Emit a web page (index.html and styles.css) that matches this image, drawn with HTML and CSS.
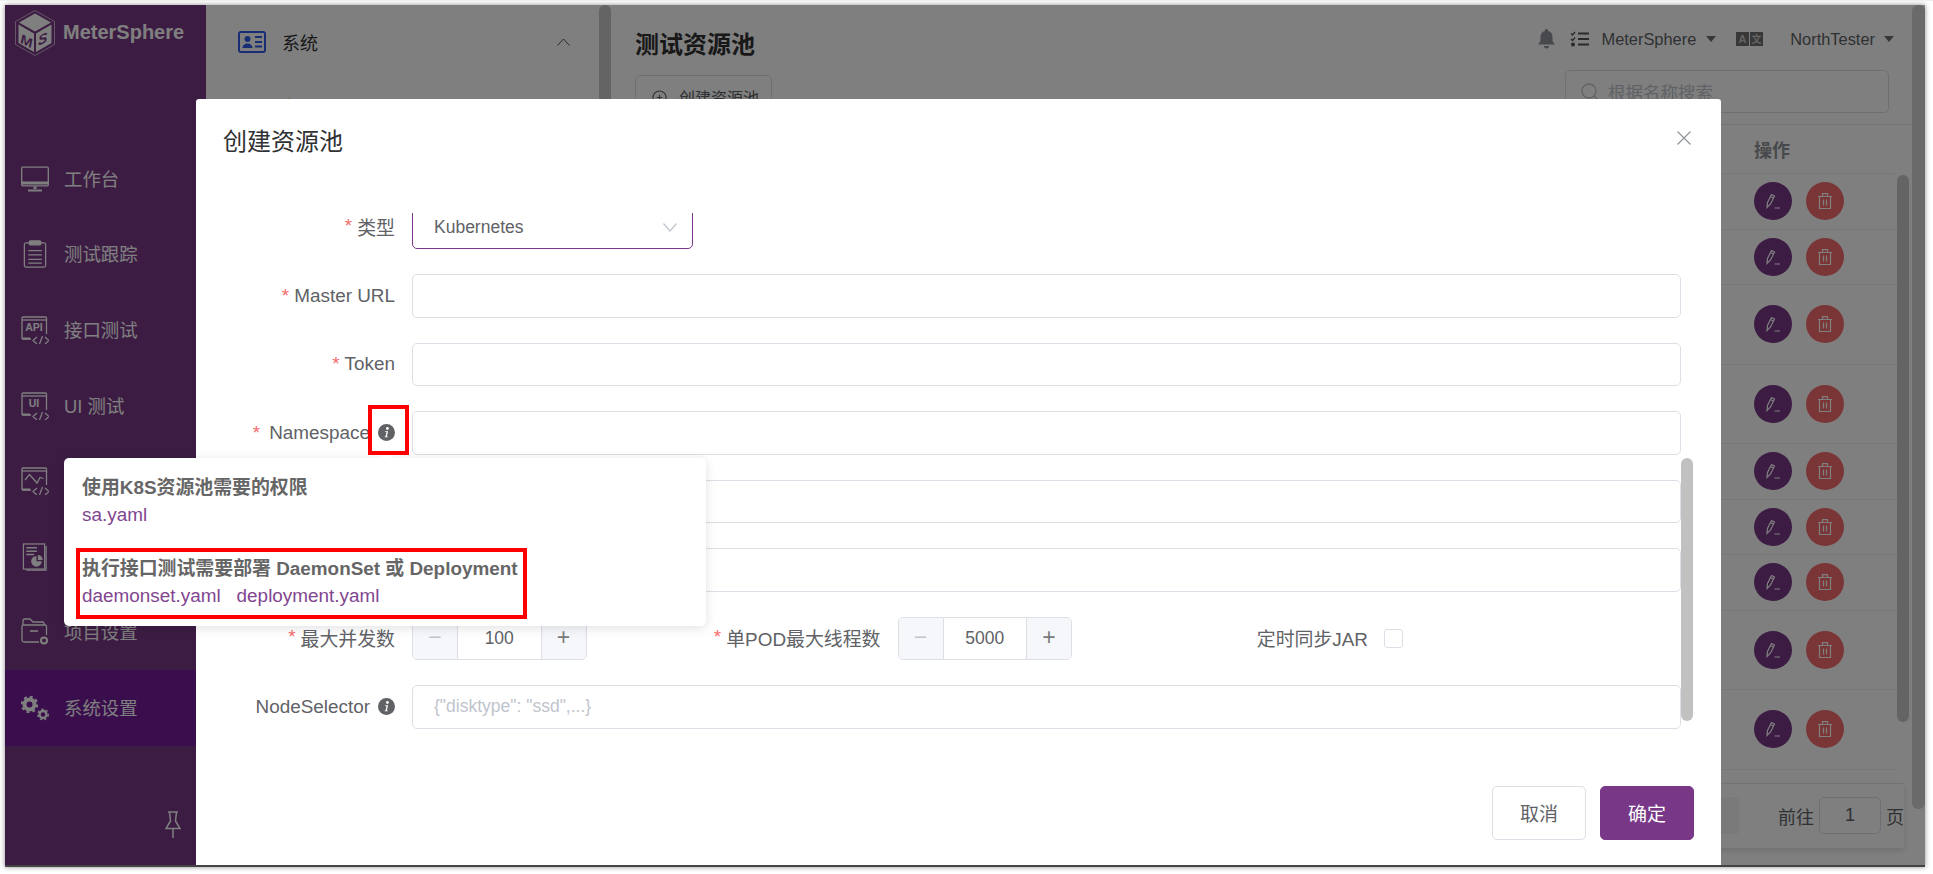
FILE: index.html
```html
<!DOCTYPE html>
<html lang="zh">
<head>
<meta charset="utf-8">
<title>创建资源池</title>
<link rel="stylesheet" href="styles.css">
</head>
<body>
<div class="app">
  <aside class="side">
    <div class="logo">
      <svg class="logo-mark" viewBox="0 0 40 46">
        <polygon points="20,.5 39.5,11.5 39.5,34.5 20,45.5 .5,34.5 .5,11.5" fill="none" stroke="#fff" stroke-width=".6"/>
        <polygon points="20,3.5 36,12.5 20,21.5 4,12.5" fill="#fff"/>
        <polygon points="3.5,14.5 19,23.5 19,42 3.5,33" fill="#fff"/>
        <polygon points="36.5,14.5 21,23.5 21,42 36.5,33" fill="#fff"/>
        <text class="logo-m" transform="translate(5.5 33) skewY(26)">M</text>
        <text class="logo-s" transform="translate(23 36) skewY(-26)">S</text>
      </svg>
      <span class="logo-text">MeterSphere</span>
    </div>
    <nav class="nav">
      <a class="nav-item">
        <svg class="nav-ico" viewBox="0 0 28 25" fill="none" stroke="#fff"><rect x=".7" y=".7" width="26.6" height="18.6" rx="1" stroke-width="1.3"/><path d="M1 16.5h26" stroke-width="3"/><path d="M14 20v2.5" stroke-width="3"/><path d="M7 24h14" stroke-width="2"/></svg>
        <span class="nav-text">工作台</span>
      </a>
      <a class="nav-item">
        <svg class="nav-ico" viewBox="0 0 28 29" fill="none" stroke="#fff" stroke-width="1.3"><path d="M8 3H4.500A1.500 1.500 0 0 0 3 4.500v22A1.500 1.500 0 0 0 4.500 28h19a1.500 1.500 0 0 0 1.500-1.500v-22A1.500 1.500 0 0 0 23.500 3H20"/><rect x="8" y="1" width="12" height="4" rx="1" fill="#fff"/><path d="M7 11h14M7 15.500h14M7 20h14M7 24h14"/></svg>
        <span class="nav-text">测试跟踪</span>
      </a>
      <a class="nav-item">
        <svg class="nav-ico" viewBox="0 0 28 28" fill="none" stroke="#fff" stroke-width="1.3"><path d="M25.500 18V2a1 1 0 0 0-1-1H2a1 1 0 0 0-1 1v20a1 1 0 0 0 1 1h8"/><path d="M1 4h24.500"/><path d="M1 22.500h8" stroke-width="2"/><path d="M16 21l-4 3.500 4 3.500M24 21l4 3.500-4 3.500M21.500 20l-3 8"/><text class="ico-text" x="13" y="15" text-anchor="middle">API</text></svg>
        <span class="nav-text">接口测试</span>
      </a>
      <a class="nav-item">
        <svg class="nav-ico" viewBox="0 0 28 28" fill="none" stroke="#fff" stroke-width="1.3"><path d="M25.500 18V2a1 1 0 0 0-1-1H2a1 1 0 0 0-1 1v20a1 1 0 0 0 1 1h8"/><path d="M1 4h24.500"/><path d="M1 22.500h8" stroke-width="2"/><path d="M16 21l-4 3.500 4 3.500M24 21l4 3.500-4 3.500M21.500 20l-3 8"/><text class="ico-text" x="13" y="15" text-anchor="middle">UI</text></svg>
        <span class="nav-text">UI 测试</span>
      </a>
      <a class="nav-item">
        <svg class="nav-ico" viewBox="0 0 28 28" fill="none" stroke="#fff" stroke-width="1.3"><path d="M25.500 18V2a1 1 0 0 0-1-1H2a1 1 0 0 0-1 1v20a1 1 0 0 0 1 1h8"/><path d="M1 4h24.500"/><path d="M1 22.500h8" stroke-width="2"/><path d="M16 21l-4 3.500 4 3.500M24 21l4 3.500-4 3.500M21.500 20l-3 8"/><path d="M4 13l4.500-5.500 4 4.500 3.500 4 3-5.500 3.500 1"/></svg>
      </a>
      <a class="nav-item">
        <svg class="nav-ico" viewBox="0 0 28 29" fill="none" stroke="#fff" stroke-width="1.3"><rect x="2" y="1" width="22" height="26"/><path d="M25.500 3v25H5"/><path d="M5 5h11M5 8.500h11M5 12h8" stroke-width="1.600"/><path d="M15.500 13.500a5.500 5.500 0 1 0 5.500 5.500h-5.500z" fill="#fff" stroke="none"/><path d="M17 12.500a5 5 0 0 1 5 5h-5z" fill="#fff" stroke="none"/></svg>
      </a>
      <a class="nav-item">
        <svg class="nav-ico" viewBox="0 0 28 28" fill="none" stroke="#fff" stroke-width="1.3"><path d="M18 24H3a2 2 0 0 1-2-2V8.500a1.500 1.500 0 0 1 1.500-1.500H24a1.500 1.500 0 0 1 1.500 1.500V17"/><path d="M2 7V2.500A1.500 1.500 0 0 1 3.500 1H9l3 3h9.500A1.500 1.500 0 0 1 23 5.500V7"/><path d="M9 13h8" stroke-width="1.600"/><circle cx="23" cy="22.500" r="3" stroke-width="2"/></svg>
        <span class="nav-text">项目设置</span>
      </a>
      <a class="nav-item is-active">
        <svg class="nav-ico" viewBox="0 0 28 25" fill="none" stroke="#fff"><circle cx="8.500" cy="9" r="5" stroke-width="4"/><circle cx="8.500" cy="9" r="7.700" stroke-width="2" stroke-dasharray="3 3.050"/><circle cx="22" cy="19" r="3.500" stroke-width="2.400"/><circle cx="22" cy="19" r="5.200" stroke-width="1.500" stroke-dasharray="2.200 2.250"/></svg>
        <span class="nav-text">系统设置</span>
      </a>
    </nav>
    <svg class="pin" viewBox="0 0 16 27" fill="none" stroke="#fff" stroke-width="1.500"><path d="M3 1h10M4.500 1l1 9L1 17.500h14L10.500 10l1-9M8 17.500V27"/></svg>
  </aside>

  <section class="sub">
    <div class="sub-list">
      <div class="sub-head">
        <svg class="sub-ico" viewBox="0 0 28 22"><rect x="1" y="1" width="26" height="20" rx="2" fill="none" stroke="#2f5bea" stroke-width="2"/><circle cx="9.500" cy="8" r="3" fill="#2f5bea"/><path d="M4.500 17c0-6 10-6 10 0z" fill="#2f5bea"/><path d="M17 6h7M17 11h7M17 15.500h7" stroke="#2f5bea" stroke-width="2"/></svg>
        <span class="sub-title">系统</span>
        <svg class="chev-up" viewBox="0 0 13 8" fill="none" stroke="#555" stroke-width="1"><path d="M.5 7.500l6-6.500 6 6.500"/></svg>
      </div>
      <div class="sub-child">用户</div>
    </div>
    <div class="sub-scroll"></div>
  </section>

  <main class="main">
    <div class="content">
      <header class="head">
        <div class="head-left">
          <h1 class="page-title">测试资源池</h1>
          <button class="create-btn">
            <svg class="plus-ico" viewBox="0 0 16 16" fill="none" stroke="#606266" stroke-width="1.200"><circle cx="8" cy="8" r="7"/><path d="M8 5v6M5 8h6"/></svg>
            创建资源池
          </button>
        </div>
        <div class="head-right">
          <div class="topnav">
            <svg class="bell" viewBox="0 0 17 20" fill="#909399"><path d="M8.500 0a1.500 1.500 0 0 1 1.500 1.700c3 .8 4.500 3.300 4.500 6.300v4l2.500 3.500H0L2.500 12V8c0-3 1.500-5.500 4.500-6.300A1.500 1.500 0 0 1 8.500 0zM6 17h5a2.500 2.500 0 0 1-5 0z"/></svg>
            <svg class="tasks" viewBox="0 0 19 16" fill="none" stroke="#555" stroke-width="2"><path d="M8 2.500h11M8 8h11M8 13.500h11" /><path d="M1 2.500l1.500 1.500L5 1M1 8l1.500 1.500L5 6.500" stroke-width="1.400"/><circle cx="3" cy="13.500" r="1" /></svg>
            <span class="tn-text">MeterSphere</span>
            <span class="caret"></span>
            <svg class="lang" viewBox="0 0 27 14"><rect width="13" height="14" fill="#707070"/><rect x="14" width="13" height="14" fill="#707070"/><text class="lang-a" x="6.500" y="11" text-anchor="middle">A</text><text class="lang-b" x="20.500" y="11" text-anchor="middle">文</text></svg>
            <span class="tn-text tn-user">NorthTester</span>
            <span class="caret"></span>
          </div>
          <div class="search">
            <svg class="search-ico" viewBox="0 0 17 17" fill="none" stroke="#c0c4cc" stroke-width="1.300"><circle cx="8" cy="8" r="7"/><path d="M13 13l3.500 3.500"/></svg>
            <span class="search-ph">根据名称搜索</span>
          </div>
        </div>
      </header>
      <div class="tbl">
        <div class="thead"><span class="th-op">操作</span></div>
        <div class="tbody">
          <div class="rows">
            <div class="row row-s"><span class="ops"><i class="op op-edit"><svg viewBox="0 0 14 16" fill="none" stroke="#fff" stroke-width="1.200"><path d="M1 14.500l.5-5L5.500 1.500l3 1.500-4 8-3.500 3.500zM4.500 3.500l3 1.500M8.500 15h5.500"/></svg></i><i class="op op-del"><svg viewBox="0 0 14 16" fill="none" stroke="#fff" stroke-width="1.200"><path d="M0 3.500h14M4.500 3.500V.7h5v2.800M1.500 3.500v12h11v-12M5.500 6.500v6M8.500 6.500v6"/></svg></i></span></div>
            <div class="row row-s"><span class="ops"><i class="op op-edit"><svg viewBox="0 0 14 16" fill="none" stroke="#fff" stroke-width="1.200"><path d="M1 14.500l.5-5L5.500 1.500l3 1.500-4 8-3.500 3.500zM4.500 3.500l3 1.500M8.500 15h5.500"/></svg></i><i class="op op-del"><svg viewBox="0 0 14 16" fill="none" stroke="#fff" stroke-width="1.200"><path d="M0 3.500h14M4.500 3.500V.7h5v2.800M1.500 3.500v12h11v-12M5.500 6.500v6M8.500 6.500v6"/></svg></i></span></div>
            <div class="row row-l"><span class="ops"><i class="op op-edit"><svg viewBox="0 0 14 16" fill="none" stroke="#fff" stroke-width="1.200"><path d="M1 14.500l.5-5L5.500 1.500l3 1.500-4 8-3.500 3.500zM4.500 3.500l3 1.500M8.500 15h5.500"/></svg></i><i class="op op-del"><svg viewBox="0 0 14 16" fill="none" stroke="#fff" stroke-width="1.200"><path d="M0 3.500h14M4.500 3.500V.7h5v2.800M1.500 3.500v12h11v-12M5.500 6.500v6M8.500 6.500v6"/></svg></i></span></div>
            <div class="row row-l"><span class="ops"><i class="op op-edit"><svg viewBox="0 0 14 16" fill="none" stroke="#fff" stroke-width="1.200"><path d="M1 14.500l.5-5L5.500 1.500l3 1.500-4 8-3.500 3.500zM4.500 3.500l3 1.500M8.500 15h5.500"/></svg></i><i class="op op-del"><svg viewBox="0 0 14 16" fill="none" stroke="#fff" stroke-width="1.200"><path d="M0 3.500h14M4.500 3.500V.7h5v2.800M1.500 3.500v12h11v-12M5.500 6.500v6M8.500 6.500v6"/></svg></i></span></div>
            <div class="row row-s"><span class="ops"><i class="op op-edit"><svg viewBox="0 0 14 16" fill="none" stroke="#fff" stroke-width="1.200"><path d="M1 14.500l.5-5L5.500 1.500l3 1.500-4 8-3.500 3.500zM4.500 3.500l3 1.500M8.500 15h5.500"/></svg></i><i class="op op-del"><svg viewBox="0 0 14 16" fill="none" stroke="#fff" stroke-width="1.200"><path d="M0 3.500h14M4.500 3.500V.7h5v2.800M1.500 3.500v12h11v-12M5.500 6.500v6M8.500 6.500v6"/></svg></i></span></div>
            <div class="row row-s"><span class="ops"><i class="op op-edit"><svg viewBox="0 0 14 16" fill="none" stroke="#fff" stroke-width="1.200"><path d="M1 14.500l.5-5L5.500 1.500l3 1.500-4 8-3.500 3.500zM4.500 3.500l3 1.500M8.500 15h5.500"/></svg></i><i class="op op-del"><svg viewBox="0 0 14 16" fill="none" stroke="#fff" stroke-width="1.200"><path d="M0 3.500h14M4.500 3.500V.7h5v2.800M1.500 3.500v12h11v-12M5.500 6.500v6M8.500 6.500v6"/></svg></i></span></div>
            <div class="row row-s"><span class="ops"><i class="op op-edit"><svg viewBox="0 0 14 16" fill="none" stroke="#fff" stroke-width="1.200"><path d="M1 14.500l.5-5L5.500 1.500l3 1.500-4 8-3.500 3.500zM4.500 3.500l3 1.500M8.500 15h5.500"/></svg></i><i class="op op-del"><svg viewBox="0 0 14 16" fill="none" stroke="#fff" stroke-width="1.200"><path d="M0 3.500h14M4.500 3.500V.7h5v2.800M1.500 3.500v12h11v-12M5.500 6.500v6M8.500 6.500v6"/></svg></i></span></div>
            <div class="row row-l"><span class="ops"><i class="op op-edit"><svg viewBox="0 0 14 16" fill="none" stroke="#fff" stroke-width="1.200"><path d="M1 14.500l.5-5L5.500 1.500l3 1.500-4 8-3.500 3.500zM4.500 3.500l3 1.500M8.500 15h5.500"/></svg></i><i class="op op-del"><svg viewBox="0 0 14 16" fill="none" stroke="#fff" stroke-width="1.200"><path d="M0 3.500h14M4.500 3.500V.7h5v2.800M1.500 3.500v12h11v-12M5.500 6.500v6M8.500 6.500v6"/></svg></i></span></div>
            <div class="row row-l"><span class="ops"><i class="op op-edit"><svg viewBox="0 0 14 16" fill="none" stroke="#fff" stroke-width="1.200"><path d="M1 14.500l.5-5L5.500 1.500l3 1.500-4 8-3.500 3.500zM4.500 3.500l3 1.500M8.500 15h5.500"/></svg></i><i class="op op-del"><svg viewBox="0 0 14 16" fill="none" stroke="#fff" stroke-width="1.200"><path d="M0 3.500h14M4.500 3.500V.7h5v2.800M1.500 3.500v12h11v-12M5.500 6.500v6M8.500 6.500v6"/></svg></i></span></div>
          </div>
          <div class="tbl-thumb"></div>
        </div>
      </div>
      <footer class="pager">
        <span class="pg-btn"></span>
        <span class="pg-label">前往</span>
        <span class="pg-input">1</span>
        <span class="pg-label">页</span>
      </footer>
    </div>
    <div class="main-scroll"><div class="main-thumb"></div></div>
  </main>

  <div class="overlay"></div>

  <div class="dialog">
    <div class="dialog-head">
      <h2 class="dialog-title">创建资源池</h2>
      <svg class="dialog-close" viewBox="0 0 14 14" fill="none" stroke="#909399" stroke-width="1.200"><path d="M.5.5l13 13M13.500.5l-13 13"/></svg>
    </div>
    <div class="dialog-body">
      <form class="form">
        <div class="form-row form-row-first">
          <label class="lbl lbl-cjk"><b class="req">*</b>类型</label>
          <div class="select">
            <span>Kubernetes</span>
            <svg class="chev-down" viewBox="0 0 14 9" fill="none" stroke="#c0c4cc" stroke-width="1.200"><path d="M.5.500l6.500 7.500 6.500-7.500"/></svg>
          </div>
        </div>
        <div class="form-row"><label class="lbl"><b class="req">*</b>Master URL</label><div class="input"></div></div>
        <div class="form-row"><label class="lbl"><b class="req">*</b>Token</label><div class="input"></div></div>
        <div class="form-row"><label class="lbl"><b class="req req-wide">*</b>Namespace<svg class="info" viewBox="0 0 17 17"><circle cx="8.500" cy="8.500" r="8.500" fill="#606266"/><circle cx="9.400" cy="4.500" r="1.400" fill="#fff"/><path d="M7.200 7.200h2.900l-1.300 5.300h1.100l-.2.800H6.600l.2-.8h.7l1-4.500h-1.500z" fill="#fff"/></svg></label><div class="input"></div></div>
        <div class="form-row"><label class="lbl"></label><div class="input"></div></div>
        <div class="form-row"><label class="lbl"></label><div class="input"></div></div>
        <div class="form-row form-row-num">
          <label class="lbl lbl-cjk"><b class="req">*</b>最大并发数</label>
          <div class="num"><span class="num-btn num-dis">−</span><span class="num-val">100</span><span class="num-btn">+</span></div>
          <label class="lbl lbl-cjk lbl-2"><b class="req">*</b>单POD最大线程数</label>
          <div class="num"><span class="num-btn num-dis">−</span><span class="num-val">5000</span><span class="num-btn">+</span></div>
          <label class="lbl lbl-cjk lbl-3">定时同步JAR</label>
          <span class="check"></span>
        </div>
        <div class="form-row"><label class="lbl">NodeSelector<svg class="info" viewBox="0 0 17 17"><circle cx="8.500" cy="8.500" r="8.500" fill="#606266"/><circle cx="9.400" cy="4.500" r="1.400" fill="#fff"/><path d="M7.200 7.200h2.900l-1.300 5.300h1.100l-.2.800H6.600l.2-.8h.7l1-4.500h-1.500z" fill="#fff"/></svg></label><div class="input input-ph">{"disktype": "ssd",...}</div></div>
      </form>
      <div class="form-scroll"><div class="form-thumb"></div></div>
    </div>
    <div class="dialog-foot">
      <button class="btn">取消</button>
      <button class="btn btn-primary">确定</button>
    </div>
  </div>

  <div class="popover">
    <span class="pop-arrow"></span>
    <div class="pop-block">
      <p class="pop-title">使用K8S资源池需要的权限</p>
      <p class="pop-links"><a>sa.yaml</a></p>
    </div>
    <div class="pop-block">
      <p class="pop-title">执行接口测试需要部署 DaemonSet 或 Deployment</p>
      <p class="pop-links"><a>daemonset.yaml</a><a>deployment.yaml</a></p>
    </div>
  </div>

  <div class="mark mark-icon"></div>
  <div class="mark mark-block"></div>
</div>
</body>
</html>
```
FILE: styles.css
```css
* { box-sizing: border-box; }
html, body { height: 100%; }
body {
  margin: 0;
  padding: 4px 8px 7px 5px;
  background: #fff;
  border-top: 1px solid #eee;
  font-family: "Liberation Sans", "Noto Sans CJK SC", sans-serif;
  font-size: 17.5px;
  color: #606266;
  overflow: hidden;
}
p, h1, h2 { margin: 0; }
.app {
  position: relative;
  display: flex;
  width: 1920px;
  height: 862px;
  border-bottom: 2px solid #444;
  box-shadow: 0 0 5px rgba(0,0,0,.45);
}

/* sidebar */
.side {
  width: 201px;
  flex: none;
  display: flex;
  flex-direction: column;
  background: #783887;
  color: #fff;
}
.logo { display: flex; height: 136px; padding: 5px 0 0 10px; gap: 8px; }
.logo-mark { width: 40px; height: 46px; }
.logo-m, .logo-s { font: italic 700 14px "Liberation Sans", sans-serif; fill: #783887; }
.logo-text { font-size: 20px; font-weight: 700; line-height: 44px; }
.nav { display: flex; flex-direction: column; }
.nav-item { display: flex; align-items: center; gap: 15px; height: 75.6px; padding-left: 16px; }
.nav-item.is-active { background: #741a9a; }
.nav-ico { width: 28px; height: 28px; flex: none; }
.nav-text { font-size: 18.4px; padding-bottom: 2px; }
.ico-text { font: 700 10.5px "Liberation Sans", sans-serif; fill: #fff; stroke: none; }
.pin { width: 16px; height: 27px; margin: auto 25px 27px auto; }

/* sub menu */
.sub { width: 406px; flex: none; display: flex; background: #fff; }
.sub-list { flex: 1; overflow: hidden; }
.sub-head { display: flex; align-items: center; height: 73px; padding: 0 29px 0 32px; color: #303133; font-size: 18px; }
.sub-ico { width: 28px; height: 22px; }
.sub-title { margin-left: 16px; flex: 1; }
.chev-up { width: 13px; height: 8px; }
.sub-child { padding-left: 57px; margin-top: 19px; line-height: 20px; color: #f5a623; }
.sub-scroll { width: 12px; background: #c8c8c8; border-radius: 6px; margin-right: 1px; }

/* main */
.main { flex: 1; min-width: 0; display: flex; background: #fff; }
.content { flex: 1; min-width: 0; display: flex; flex-direction: column; }
.head { display: flex; justify-content: space-between; height: 120px; padding: 0 18px 0 23px; border-bottom: 1px solid #e6e6e6; }
.head-left { padding-top: 24px; }
.page-title { font-size: 24px; line-height: 32px; font-weight: 700; color: #303133; }
.create-btn {
  display: flex; align-items: center; gap: 12px;
  width: 137px; height: 44px; margin-top: 14px; padding: 0 0 0 16px;
  background: #fff; border: 1px solid #dcdfe6; border-radius: 5px;
  font: inherit; font-size: 16px; color: #606266;
}
.plus-ico { width: 15px; height: 15px; }
.head-right { padding-top: 24px; display: flex; flex-direction: column; align-items: flex-end; }
.topnav { display: flex; align-items: center; height: 20px; color: #606266; font-size: 16.4px; }
.bell { width: 17px; height: 20px; }
.tasks { width: 19px; height: 16px; margin-left: 15px; }
.tn-text { margin-left: 13px; }
.caret { width: 0; height: 0; margin-left: 10px; border: 5px solid transparent; border-top: 6px solid #707070; border-bottom: 0; }
.lang { width: 27px; height: 14px; margin-left: 20px; }
.lang-a { font: 700 11px "Liberation Sans", sans-serif; fill: #c8c8c8; }
.lang-b { font: 700 10px "Noto Sans CJK SC", sans-serif; fill: #c8c8c8; }
.tn-user { margin-left: 27px; }
.tn-user + .caret { margin-left: 9px; }
.search {
  display: flex; align-items: center; gap: 10px;
  width: 324px; height: 43px; margin: 21px 5px 0 0; padding-left: 15px;
  border: 1px solid #dcdfe6; border-radius: 5px;
}
.search-ico { width: 17px; height: 17px; }
.search-ph { color: #c0c4cc; }

/* table */
.tbl { flex: none; padding-right: 3px; }
.thead { height: 49px; display: flex; align-items: center; padding-left: 1142px; border-bottom: 1px solid #ebeef5; margin-right: 15px; }
.th-op { font-weight: 700; color: #909399; font-size: 18px; }
.tbody { display: flex; align-items: flex-start; }
.rows { flex: 1; min-width: 0; }
.row { display: flex; align-items: center; padding-left: 1142px; border-bottom: 1px solid #ebeef5; }
.row-s { height: 55.5px; }
.row-l { height: 79.5px; }
.ops { display: flex; gap: 14px; }
.op { width: 38px; height: 38px; border-radius: 50%; display: flex; align-items: center; justify-content: center; }
.op svg { width: 14px; height: 16px; }
.op-edit { background: #783887; }
.op-del { background: #f56c6c; }
.tbl-thumb { width: 12px; height: 547px; margin-top: 1px; background: #c8c8c8; border-radius: 6px; }
.pager {
  display: flex; align-items: center; justify-content: flex-end;
  height: 65px; margin: 13px 8px 0 0; gap: 5px;
  border-top: 1px solid #e6e6e6; box-shadow: 0 3px 6px rgba(0,0,0,.12); font-size: 18px;
}
.pg-btn { width: 50px; height: 37px; margin-right: 34px; background: #f4f4f5; border-radius: 3px; }
.pg-input { width: 62px; height: 37px; border: 1px solid #dcdfe6; border-radius: 5px; text-align: center; line-height: 35px; }
.main-scroll { width: 13px; flex: none; }
.main-thumb { height: 804px; background: #d4d4d4; border-radius: 6px; }

/* overlay */
.overlay { position: absolute; inset: 0; background: rgba(0,0,0,.5); }

/* dialog */
.dialog {
  position: absolute; left: 191px; top: 94px;
  width: 1525px; height: 766px;
  display: flex; flex-direction: column;
  background: #fff; border-radius: 3px 3px 0 0;
}
.dialog-head { position: relative; height: 114px; padding: 25px 0 0 27px; }
.dialog-title { font-size: 24px; font-weight: 400; line-height: 36px; color: #303133; }
.dialog-close { position: absolute; top: 32px; right: 30px; width: 14px; height: 14px; }
.dialog-body { display: flex; height: 535px; }
.form { width: 1485px; flex: none; overflow: hidden; }
.form-row { display: flex; align-items: center; gap: 17px; height: 43.5px; margin-bottom: 25px; }
.form-row-first { margin-top: -7.5px; }
.lbl { width: 199px; flex: none; display: flex; justify-content: flex-end; align-items: center; font-size: 18.9px; color: #606266; white-space: nowrap; }
.lbl-cjk { padding-bottom: 2px; }
.req { font-weight: 400; color: #f56c6c; margin-right: 5px; }
.req-wide { margin-right: 9px; }
.info { width: 17px; height: 17px; margin-left: 8px; flex: none; }
.input { flex: 1; height: 100%; border: 1px solid #dcdfe6; border-radius: 5px; padding-left: 21px; line-height: 41px; }
.input-ph { color: #c0c4cc; }
.select {
  display: flex; align-items: center; justify-content: space-between;
  width: 281px; height: 100%; padding: 0 15px 0 21px;
  border: 1px solid #783887; border-radius: 5px;
}
.chev-down { width: 14px; height: 9px; }
.num { display: flex; width: 174.5px; height: 100%; border: 1px solid #dcdfe6; border-radius: 5px; overflow: hidden; flex: none; }
.num-btn { width: 45px; background: #f5f7fa; text-align: center; line-height: 38px; font-size: 23px; font-weight: 300; color: #7a7a7a; flex: none; }
.num-dis { color: #c0c4cc; border-right: 1px solid #dcdfe6; }
.num-btn:last-child { border-left: 1px solid #dcdfe6; }
.num-val { flex: 1; text-align: center; line-height: 41px; }
.lbl-2 { width: 277px; }
.lbl-3 { width: 279px; }
.check { width: 19px; height: 19px; border: 1px solid #dcdfe6; border-radius: 3px; flex: none; margin-left: -1px; }
.form-scroll { width: 12px; flex: none; }
.form-thumb { height: 263px; margin-top: 245px; background: #c1c1c1; border-radius: 6px; }
.dialog-foot { display: flex; justify-content: flex-end; gap: 14px; padding: 38px 27px 0 0; }
.btn { width: 94px; height: 54px; padding: 0 0 2px; background: #fff; border: 1px solid #dcdfe6; border-radius: 5px; font: inherit; font-size: 19px; color: #606266; }
.btn-primary { background: #783887; border-color: #783887; color: #fff; }

/* popover */
.popover {
  position: absolute; left: 59px; top: 453px;
  width: 642px; height: 168px; padding: 18px 18px;
  background: #fff; border-radius: 5px;
  box-shadow: 0 2px 12px rgba(0,0,0,.12);
  font-size: 18.9px;
}
.pop-arrow { position: absolute; left: 316px; top: -6px; border: 6px solid transparent; border-top: 0; border-bottom-color: #fff; }
.pop-block + .pop-block { margin-top: 30px; }
.pop-title { font-size: 18.9px; font-weight: 700; line-height: 24px; color: #666; }
.pop-links { margin-top: 3px; line-height: 24px; color: #81468f; }
.pop-links a + a { margin-left: 16px; }

/* annotation boxes */
.mark { position: absolute; border: 4px solid #f00; }
.mark-icon { left: 363px; top: 400px; width: 41px; height: 50px; }
.mark-block { left: 71px; top: 543px; width: 451px; height: 71px; }
```
